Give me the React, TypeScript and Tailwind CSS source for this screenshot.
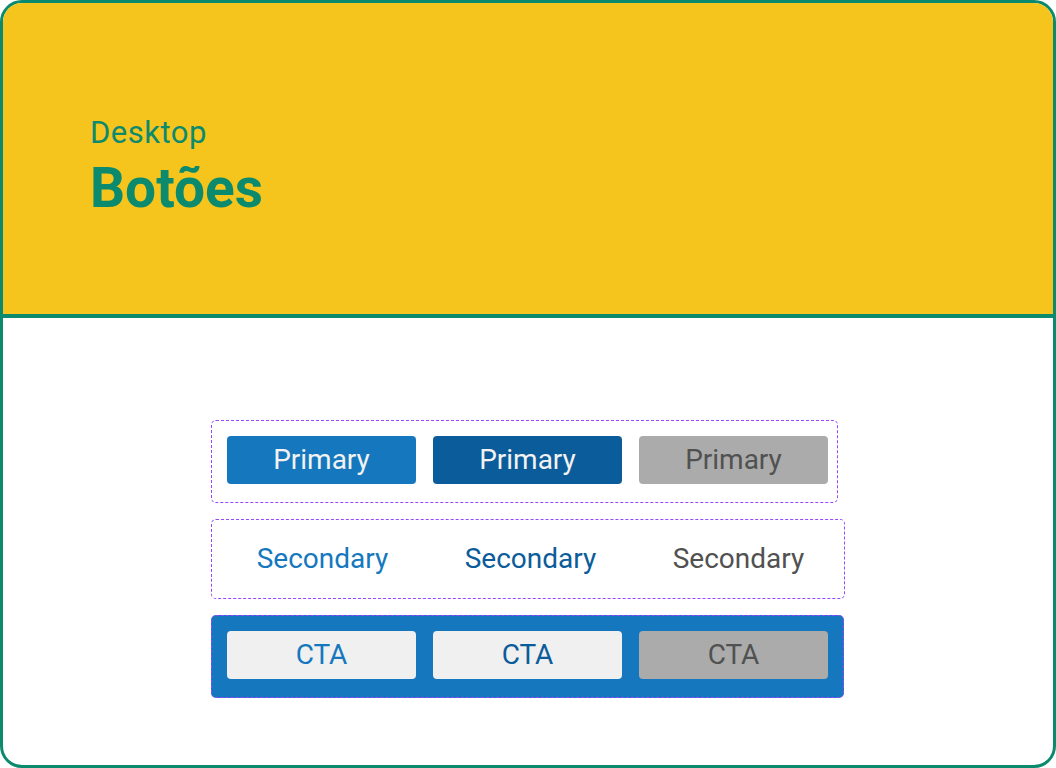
const font = { fontFamily: "Roboto, 'Noto Sans', sans-serif" };

function Btn({ bg, fg, label }: { bg: string; fg: string; label: string }) {
    return (
        <div className={`flex h-[48px] w-[189px] items-center justify-center rounded-[4px] text-[28px] ${bg} ${fg}`}>
            {label}
        </div>
    );
}

export default function App() {
    return (
        <div className="h-[768px] w-[1056px] bg-white" style={font}>
            <div className="flex h-[768px] w-[1056px] flex-col overflow-hidden rounded-[22px] border-[3px] border-[#0b8a6e]">
                <div className="h-[315px] shrink-0 border-b-[4px] border-[#0b8a6e] bg-[#f5c51e] pl-[87px] pt-[110px]">
                    <p className="text-[31px] leading-[40px] tracking-[0.5px] text-[#0b8a6e]">Desktop</p>
                    <p className="mt-[4px] text-[55px] font-bold leading-[62px] text-[#0b8a6e]">Botões</p>
                </div>

                <div className="flex flex-1 flex-col gap-[16px] pl-[208px] pt-[102px]">
                    <div className="flex h-[83px] w-[627px] items-start gap-[17px] rounded-[5px] border border-dashed border-[#9747ff] pl-[15px] pt-[15px]">
                        <Btn bg="bg-[#1578be]" fg="text-[#f2f2f2]" label="Primary" />
                        <Btn bg="bg-[#0b5c9a]" fg="text-[#f2f2f2]" label="Primary" />
                        <Btn bg="bg-[#aaabaa]" fg="text-[#515151]" label="Primary" />
                    </div>

                    <div className="flex h-[80px] w-[634px] items-center gap-[19px] rounded-[5px] border border-dashed border-[#9747ff] pl-[16px]">
                        <Btn bg="" fg="text-[#1578be]" label="Secondary" />
                        <Btn bg="" fg="text-[#0b5c9a]" label="Secondary" />
                        <Btn bg="" fg="text-[#515151]" label="Secondary" />
                    </div>

                    <div className="flex h-[83px] w-[633px] items-start gap-[17px] rounded-[5px] border border-dashed border-[#9747ff] bg-[#1578be] pl-[15px] pt-[15px]">
                        <Btn bg="bg-[#f0f0f0]" fg="text-[#1578be]" label="CTA" />
                        <Btn bg="bg-[#f0f0f0]" fg="text-[#0b5c9a]" label="CTA" />
                        <Btn bg="bg-[#aaabaa]" fg="text-[#515151]" label="CTA" />
                    </div>
                </div>
            </div>
        </div>
    );
}
